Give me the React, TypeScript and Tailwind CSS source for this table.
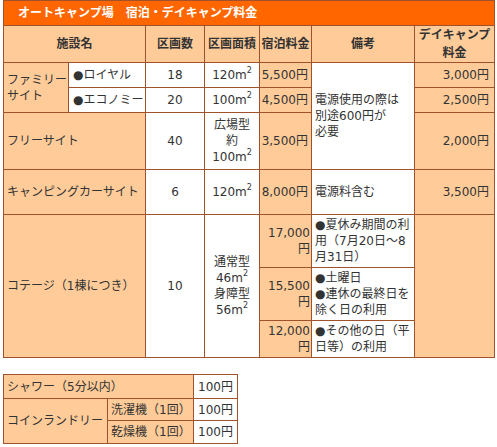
import React from "react";

const B = "border border-[#a0522d]";
const P = `${B} bg-[#ffcc99]`;
const W = `${B} bg-white`;

function Sq() {
  return <sup className="text-[8px] relative -top-[1px] align-super leading-none">2</sup>;
}

export default function App() {
  return (
    <div
      className="w-[497px] h-[447px] bg-white text-[#333333] text-[12px] leading-[16px] pl-[3px]"
      style={{ fontFamily: '"DejaVu Sans", "Noto Sans CJK JP", sans-serif' }}
    >
      <table className="border-collapse table-fixed w-[491px]">
        <colgroup>
          <col className="w-[65px]" />
          <col className="w-[77px]" />
          <col className="w-[59px]" />
          <col className="w-[55px]" />
          <col className="w-[52px]" />
          <col className="w-[103px]" />
          <col className="w-[80px]" />
        </colgroup>
        <tbody>
          <tr className="h-[25px]">
            <th colSpan={7} className={`${B} bg-[#ff6600] text-white font-bold text-left pl-[14px] p-0`}>
              オートキャンプ場　宿泊・デイキャンプ料金
            </th>
          </tr>
          <tr className="h-[37px]">
            <th colSpan={2} className={`${P} font-bold text-center p-0`}>施設名</th>
            <th className={`${P} font-bold text-center p-0`}>区画数</th>
            <th className={`${P} font-bold text-center p-0 whitespace-nowrap`}>区画面積</th>
            <th className={`${P} font-bold text-center p-0 whitespace-nowrap`}>宿泊料金</th>
            <th className={`${P} font-bold text-center p-0`}>備考</th>
            <th className={`${P} font-bold text-center p-0 leading-[18px]`}>
              デイキャンプ
              <br />
              料金
            </th>
          </tr>
          <tr className="h-[25px]">
            <td rowSpan={2} className={`${P} pl-[3px] pr-0 align-middle`}>
              ファミリー
              <br />
              サイト
            </td>
            <td className={`${W} pl-[4px] whitespace-nowrap`}>●ロイヤル</td>
            <td className={`${W} text-center`}>18</td>
            <td className={`${W} text-center whitespace-nowrap`}>
              120m<Sq />
            </td>
            <td className={`${P} text-right pr-[3px]`}>5,500円</td>
            <td rowSpan={3} className={`${W} pl-[3px] align-middle`}>
              電源使用の際は
              <br />
              別途600円が
              <br />
              必要
            </td>
            <td className={`${P} text-right pr-[5px]`}>3,000円</td>
          </tr>
          <tr className="h-[25px]">
            <td className={`${W} pl-[4px] whitespace-nowrap`}>●エコノミー</td>
            <td className={`${W} text-center`}>20</td>
            <td className={`${W} text-center whitespace-nowrap`}>
              100m<Sq />
            </td>
            <td className={`${P} text-right pr-[3px]`}>4,500円</td>
            <td className={`${P} text-right pr-[5px]`}>2,500円</td>
          </tr>
          <tr className="h-[57px]">
            <td colSpan={2} className={`${P} pl-[3px]`}>フリーサイト</td>
            <td className={`${W} text-center`}>40</td>
            <td className={`${W} text-center`}>
              広場型
              <br />
              約
              <br />
              100m<Sq />
            </td>
            <td className={`${P} text-right pr-[3px]`}>3,500円</td>
            <td className={`${P} text-right pr-[5px]`}>2,000円</td>
          </tr>
          <tr className="h-[45px]">
            <td colSpan={2} className={`${P} pl-[3px] whitespace-nowrap`}>キャンピングカーサイト</td>
            <td className={`${W} text-center`}>6</td>
            <td className={`${W} text-center whitespace-nowrap`}>
              120m<Sq />
            </td>
            <td className={`${P} text-right pr-[3px]`}>8,000円</td>
            <td className={`${W} pl-[3px]`}>電源料含む</td>
            <td className={`${P} text-right pr-[5px]`}>3,500円</td>
          </tr>
          <tr className="h-[53px]">
            <td colSpan={2} rowSpan={3} className={`${P} pl-[3px] whitespace-nowrap`}>
              コテージ（1棟につき）
            </td>
            <td rowSpan={3} className={`${W} text-center`}>10</td>
            <td rowSpan={3} className={`${W} text-center`}>
              通常型
              <br />
              46m<Sq />
              <br />
              身障型
              <br />
              56m<Sq />
            </td>
            <td className={`${P} text-right pr-[1px]`}>
              17,000
              <br />
              円
            </td>
            <td className={`${W} pl-[3px]`}>
              ●夏休み期間の利
              <br />
              用（7月20日～8
              <br />
              月31日）
            </td>
            <td rowSpan={3} className={P}></td>
          </tr>
          <tr className="h-[53px]">
            <td className={`${P} text-right pr-[1px]`}>
              15,500
              <br />
              円
            </td>
            <td className={`${W} pl-[3px]`}>
              ●土曜日
              <br />
              ●連休の最終日を
              <br />
              除く日の利用
            </td>
          </tr>
          <tr className="h-[37px]">
            <td className={`${P} text-right pr-[1px]`}>
              12,000
              <br />
              円
            </td>
            <td className={`${W} pl-[3px]`}>
              ●その他の日（平
              <br />
              日等）の利用
            </td>
          </tr>
        </tbody>
      </table>

      <table className="border-collapse table-fixed w-[234px] mt-[16px]">
        <colgroup>
          <col className="w-[104px]" />
          <col className="w-[86px]" />
          <col className="w-[44px]" />
        </colgroup>
        <tbody>
          <tr className="h-[24px]">
            <td colSpan={2} className={`${P} pl-[3px] whitespace-nowrap`}>シャワー（5分以内）</td>
            <td className={`${W} pl-[4px] whitespace-nowrap`}>100円</td>
          </tr>
          <tr className="h-[22px]">
            <td rowSpan={2} className={`${P} pl-[3px] whitespace-nowrap`}>コインランドリー</td>
            <td className={`${P} pl-[3px] whitespace-nowrap`}>洗濯機（1回）</td>
            <td className={`${W} pl-[4px] whitespace-nowrap`}>100円</td>
          </tr>
          <tr className="h-[23px]">
            <td className={`${P} pl-[3px] whitespace-nowrap`}>乾燥機（1回）</td>
            <td className={`${W} pl-[4px] whitespace-nowrap`}>100円</td>
          </tr>
        </tbody>
      </table>
    </div>
  );
}
